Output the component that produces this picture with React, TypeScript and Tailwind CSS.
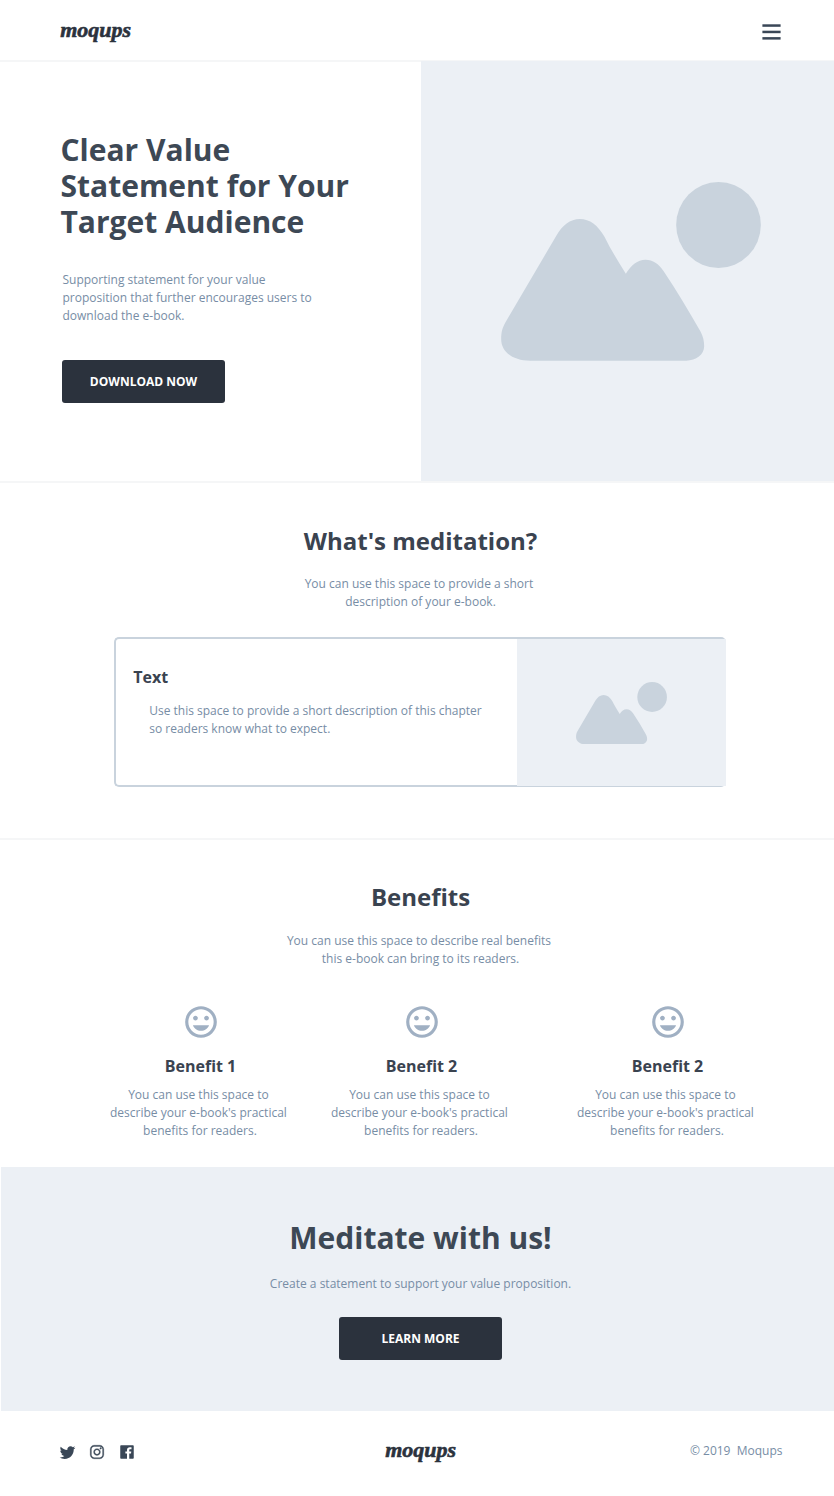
import React from "react";
import { MdMood } from "react-icons/md";
import { IoLogoTwitter, IoLogoInstagram, IoLogoFacebook } from "react-icons/io";

function Logo() {
  return (
    <svg width="76" height="32" viewBox="0 0 76 32" className="block" role="img" aria-label="moqups">
      <text
        x="1.2"
        y="22.3"
        textLength="71"
        lengthAdjust="spacingAndGlyphs"
        fill="#2b323d"
        stroke="#2b323d"
        strokeWidth="0.6"
        strokeLinejoin="round"
        className="font-['Liberation_Serif',serif] text-[22px] font-bold italic"
      >
        moqups
      </text>
    </svg>
  );
}

function Picture({ className }: { className: string }) {
  return (
    <svg viewBox="62.5 66.5 780 535.5" preserveAspectRatio="none" className={className} fill="#c9d3dd">
      <path d="M76 486 L228 228 C246 196 270 177 299 177 C329 177 353 196 373 230 C391 267 415 306 437 341 C453 315 472 299 496 299 C518 299 536 311 550 333 C590 392 627 455 661 514 C669 529 672 543 672 558 C672 583 648 601 618 601 H151 C96 601 63 573 63 537 C63 515 67 502 76 486 Z" />
      <ellipse cx="715" cy="195" rx="127" ry="128.5" />
    </svg>
  );
}

function Button({ children }: { children: React.ReactNode }) {
  return (
    <button className="block h-[43px] w-[163px] rounded-[3px] bg-[#2b323d] text-center text-xs font-bold text-white">
      {children}
    </button>
  );
}

function Benefit({ title, className }: { title: string; className: string }) {
  return (
    <div className={`flex w-[200px] flex-col items-center text-center ${className}`}>
      <MdMood className="mb-px size-[38px] text-[#a0b0c3]" />
      <h3 className="mt-3 text-base leading-6 font-bold text-[#3a4350]">{title}</h3>
      <p className="mt-2 pr-px text-xs leading-[18px]">
        You can use this space to&nbsp;
        <br />
        describe your e-book's practical&nbsp;
        <br />
        benefits for readers.
      </p>
    </div>
  );
}

export default function App() {
  return (
    <div className="h-[1496px] w-[834px] overflow-hidden bg-white font-['Open_Sans',sans-serif] text-[#778da5]">
      <header className="flex h-[62px] items-start justify-between border-b-2 border-[#f5f6f7] pr-[53px] pl-[59px]">
        <div className="pt-[15px]">
          <Logo />
        </div>
        <svg width="19" height="16" viewBox="0 0 19 16" className="mt-6" fill="#3a4757" aria-label="Menu">
          <rect x="0.4" y="0.3" width="18.2" height="2.5" />
          <rect x="0.4" y="6.7" width="18.2" height="2.5" />
          <rect x="0.4" y="13.1" width="18.2" height="2.5" />
        </svg>
      </header>

      <section className="flex h-[421px] border-b-2 border-[#f5f6f7]">
        <div className="w-[420.5px] pt-[70px] pl-[60.5px]">
          <h1 className="text-[30px] leading-9 font-bold text-[#3d4855]">
            Clear Value
            <br />
            Statement for Your
            <br />
            Target Audience
          </h1>
          <p className="mt-[31px] pl-[2px] text-xs leading-[18px]">
            Supporting statement for your value
            <br />
            proposition that further encourages users to
            <br />
            download the e-book.
          </p>
          <div className="pt-[35px] pl-[1.5px]">
            <Button>DOWNLOAD NOW</Button>
          </div>
        </div>
        <div className="-mt-px flex-1 bg-[#ecf0f5] pt-[121px] pl-[80px]">
          <Picture className="block h-[179px] w-[260px]" />
        </div>
      </section>

      <section className="flex h-[357px] flex-col items-center border-b-2 border-[#f5f6f7] pl-[7px]">
        <h2 className="mt-10 text-2xl leading-9 font-bold text-[#3a4350]">What's meditation?</h2>
        <p className="mt-4 w-full text-center text-xs leading-[18px]">
          You can use this space to provide a short&nbsp;
          <br />
          description of your e-book.
        </p>
        <div className="mt-[26px] mr-px flex h-[150px] w-[612px] rounded-[5px] border-2 border-r-0 border-[#c9d3dd]">
          <div className="w-[401px] pt-[26px] pl-[17.2px]">
            <h3 className="text-base leading-6 font-bold text-[#3a4350]">Text</h3>
            <p className="mt-[13px] pl-4 text-xs leading-[18px]">
              Use this space to provide a short description of this chapter
              <br />
              so readers know what to expect.
            </p>
          </div>
          <div className="-mb-px flex-1 bg-[#ecf0f5] pt-[42.5px] pl-[59px]">
            <Picture className="block h-[62.5px] w-[91px]" />
          </div>
        </div>
      </section>

      <section className="flex h-[327px] flex-col pl-[7px] text-center">
        <h2 className="mt-[39px] text-2xl leading-9 font-bold text-[#3a4350]">Benefits</h2>
        <p className="mt-[17px] text-xs leading-[18px]">
          You can use this space to describe real benefits&nbsp;
          <br />
          this e-book can bring to its readers.
        </p>
        <div className="mt-[35px] flex pl-[93.5px]">
          <Benefit title="Benefit 1" className="mr-[21px]" />
          <Benefit title="Benefit 2" className="mr-[46px]" />
          <Benefit title="Benefit 2" className="" />
        </div>
      </section>

      <section className="ml-px flex h-[244px] flex-col items-center bg-[#ecf0f5] pl-[6px]">
        <h2 className="mt-[49px] text-[30px] leading-[44px] font-bold text-[#3d4855]">Meditate with us!</h2>
        <p className="mt-[15px] mb-6 text-xs leading-[18px]">Create a statement to support your value proposition.</p>
        <Button>LEARN MORE</Button>
      </section>

      <footer className="flex h-[85px] items-start pr-[51.5px] pl-[59px]">
        <div className="flex w-[325px] items-center gap-[11.5px] pt-8 text-[#3a4757]">
          <IoLogoTwitter className="mr-[0.5px] size-[17px]" />
          <IoLogoInstagram className="size-[18px]" stroke="currentColor" strokeWidth="10" />
          <IoLogoFacebook className="size-[18px]" />
        </div>
        <div className="pt-6">
          <Logo />
        </div>
        <p className="ml-auto pt-[31px] text-xs leading-[18px] whitespace-pre">© 2019  Moqups</p>
      </footer>
    </div>
  );
}
